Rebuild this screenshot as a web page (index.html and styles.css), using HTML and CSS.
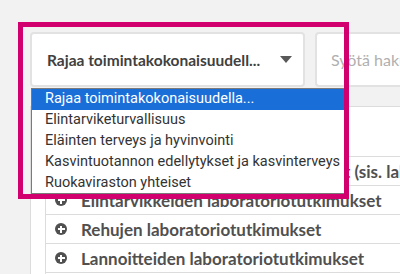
FILE: index.html
```html
<!DOCTYPE html>
<html>
  <head>
    <meta charset="UTF-8">
    <title>Laboratoriotutkimukset</title>
    <link rel="stylesheet" href="styles.css">
  </head>
  <body>
    <div class="toolbar">
      <div class="card select-card">
        <span class="select-label">Rajaa toimintakokonaisuudell...</span>
        <span class="caret"></span>
      </div>
      <div class="card search-card">
        <span class="placeholder">Syötä haku...</span>
      </div>
    </div>

    <div class="panel">
      <div class="table">
        <div class="row row-head"></div>
        <div class="row"><span class="plus"></span><span class="row-text">Eläintautien laboratoriotutkimukset (sis. laboratoriot)</span></div>
        <div class="row"><span class="plus"></span><span class="row-text">Elintarvikkeiden laboratoriotutkimukset</span></div>
        <div class="row"><span class="plus"></span><span class="row-text">Rehujen laboratoriotutkimukset</span></div>
        <div class="row"><span class="plus"></span><span class="row-text">Lannoitteiden laboratoriotutkimukset</span></div>
      </div>
    </div>

    <!-- native select list, opened -->
    <ul class="dropdown">
      <li class="selected">Rajaa toimintakokonaisuudella...</li>
      <li>Elintarviketurvallisuus</li>
      <li>Eläinten terveys ja hyvinvointi</li>
      <li>Kasvintuotannon edellytykset ja kasvinterveys</li>
      <li>Ruokaviraston yhteiset</li>
    </ul>

    <!-- highlight frame -->
    <div class="highlight"></div>
  </body>
</html>
```

FILE: styles.css
```css
body {
  margin: 0;
  background-color: #f2f2f2;
  font-family: Lato, "Open Sans", sans-serif;
  overflow: hidden;
  height: 274px;
}

.toolbar {
  display: flex;
  gap: 10px;
  padding: 32px 0 0 30px;
  height: 55px;
}

.card {
  background-color: #fff;
  border: 2px solid #e2e2e2;
  border-radius: 4px;
  box-sizing: border-box;
  height: 55px;
  display: flex;
  align-items: center;
}

.select-card {
  width: 275px;
  flex-shrink: 0;
  padding: 0 11px 0 15px;
  justify-content: space-between;
}

.select-label {
  font-weight: bold;
  font-size: 15.5px;
  color: #404040;
  white-space: nowrap;
}

.caret {
  width: 0;
  height: 0;
  border-left: 6px solid transparent;
  border-right: 6px solid transparent;
  border-top: 7px solid #595959;
}

.search-card {
  flex: 1;
  min-width: 0;
  padding-left: 14px;
  border-right: none;
  border-radius: 4px 0 0 4px;
  overflow: hidden;
}

.placeholder {
  font-size: 16px;
  color: #b0b0b0;
  white-space: nowrap;
}

/* Table panel below the toolbar */
.panel {
  margin: 19px 0 0 30px;
  border-left: 1px solid #dcdcdc;
  border-top: 1px solid #dcdcdc;
  background-color: #fff;
  height: 200px;
  padding-left: 14px;
}

.table {
  border-left: 1px solid #dcdcdc;
  height: 100%;
}

.row {
  height: 28px;
  border-bottom: 1px solid #dcdcdc;
  display: flex;
  align-items: center;
  padding-left: 9px;
  white-space: nowrap;
  overflow: hidden;
}

.row-head {
  height: 49px;
}

.plus {
  width: 12px;
  height: 12px;
  border-radius: 50%;
  background-color: #505050;
  position: relative;
  margin-right: 14px;
  flex-shrink: 0;
}

.plus::before,
.plus::after {
  content: "";
  position: absolute;
  background-color: #fff;
}

.plus::before {
  left: 2.5px;
  top: 5px;
  width: 7px;
  height: 2px;
}

.plus::after {
  left: 5px;
  top: 2.5px;
  width: 2px;
  height: 7px;
}

.row-text {
  font-weight: bold;
  font-size: 17px;
  color: #505050;
}

/* The opened dropdown list */
.dropdown {
  position: absolute;
  left: 31px;
  top: 88px;
  width: 316px;
  height: 106px;
  margin: 0;
  padding: 0;
  list-style: none;
  background-color: #fff;
  border: 1px solid #7a7a7a;
  box-sizing: border-box;
  font-family: Roboto, sans-serif;
  font-size: 14.5px;
  color: #333;
  overflow: hidden;
}

.dropdown li {
  height: 21px;
  line-height: 20px;
  padding-left: 13px;
  white-space: nowrap;
}

.dropdown li.selected {
  background-color: #1a6ed8;
  color: #fff;
}

.highlight {
  position: absolute;
  left: 18px;
  top: 22px;
  width: 331px;
  height: 177px;
  border: 5px solid #d2006f;
  box-sizing: border-box;
}
```
